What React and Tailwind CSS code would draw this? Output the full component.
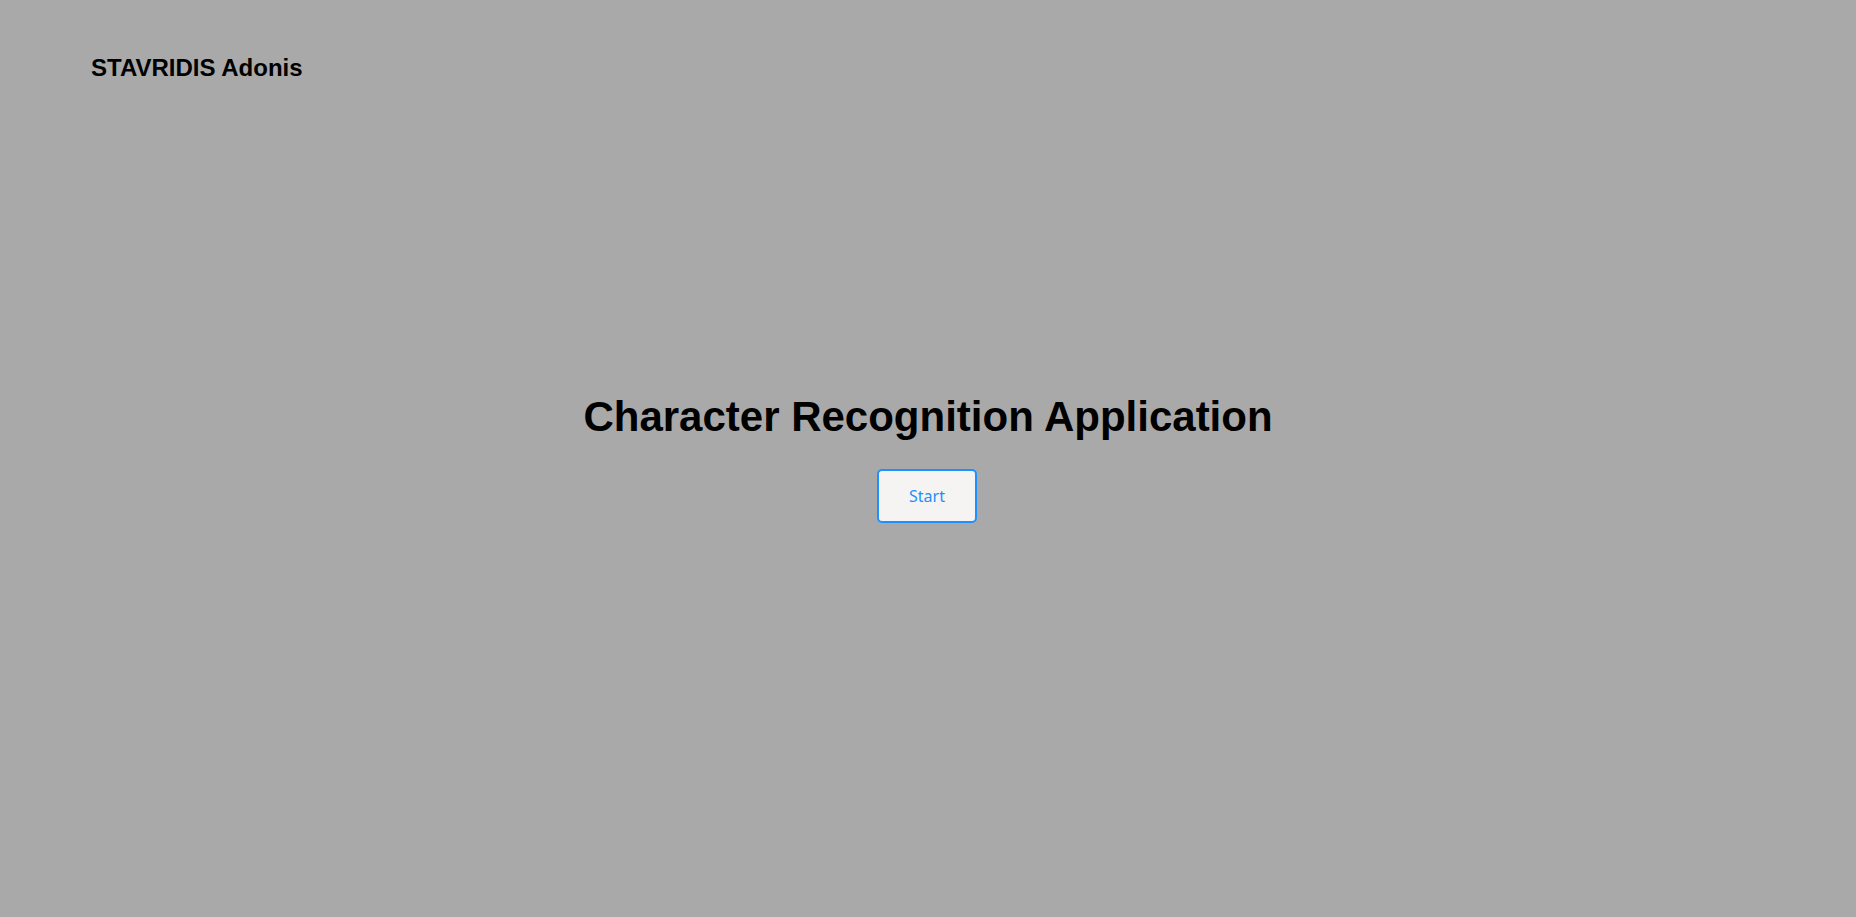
export default function App() {
  return (
    <div className="min-h-screen bg-[#a9a9a9] font-['Liberation_Sans',Arial,sans-serif] text-black">
      <header className="pl-[91px] pt-[54px]">
        <h2 className="text-[24px] font-bold leading-[27px]">STAVRIDIS Adonis</h2>
      </header>

      <main className="flex flex-col items-center pt-[312px]">
        <h1 className="text-[42px] font-bold leading-[48px]">Character Recognition Application</h1>
        <button className="mt-[28px] -ml-[2px] h-[54px] w-[100px] rounded-[5px] border-2 border-[#1e90ff] bg-[#f5f4f3] font-['Noto_Sans',sans-serif] text-[16px] text-[#1e90ff]">
          Start
        </button>
      </main>
    </div>
  );
}
